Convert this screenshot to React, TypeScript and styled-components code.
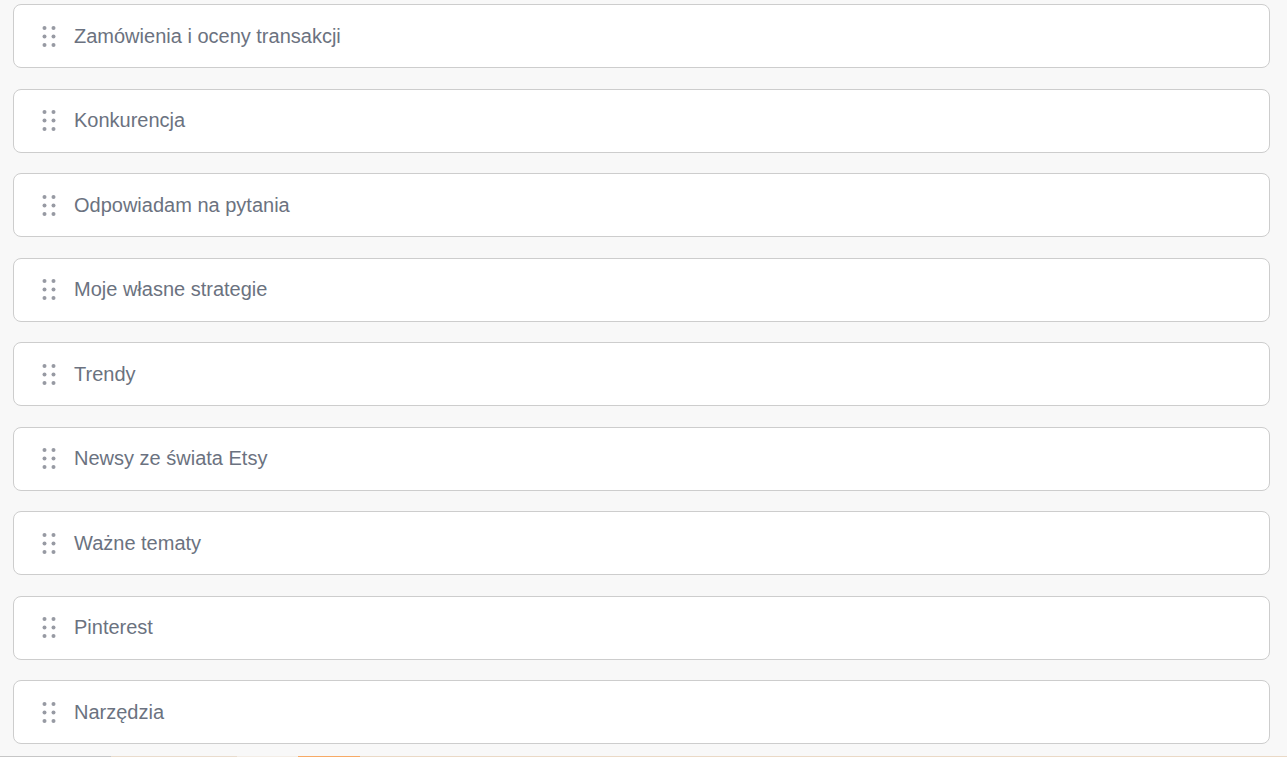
import React from "react";
import styled, { createGlobalStyle } from "styled-components";

const GlobalStyle = createGlobalStyle`
  html, body {
    margin: 0;
    padding: 0;
    background: #f8f8f8;
    font-family: "Liberation Sans", Arial, sans-serif;
    overflow: hidden;
  }
`;

const Page = styled.div`
  min-height: 757px;
  padding: 4px 17px 0 13px;
  box-sizing: border-box;
`;

const List = styled.ul`
  list-style: none;
  margin: 0;
  padding: 0;
  display: flex;
  flex-direction: column;
  gap: 20.5px;
`;

const Card = styled.li`
  height: 64px;
  box-sizing: border-box;
  display: flex;
  align-items: center;
  background: #ffffff;
  border: 1px solid #cdcdcd;
  border-radius: 8px;
  padding-left: 28px;
  cursor: grab;
`;

const Handle = styled.span`
  display: flex;
  width: 14px;
  margin-right: 18px;
  color: #979aa3;
`;

const Label = styled.span`
  font-size: 20px;
  color: #6b7280;
`;

const Strip = styled.div`
  height: 4px;
  margin: 12px -17px 0 -13px;
  background: linear-gradient(
    to right,
    #c6c6c6 0 111px,
    #e9dccd 111px 237px,
    #f3ede6 237px 298px,
    #f7aa66 298px 360px,
    #ead9c6 360px
  );
`;

const topics = [
  "Zamówienia i oceny transakcji",
  "Konkurencja",
  "Odpowiadam na pytania",
  "Moje własne strategie",
  "Trendy",
  "Newsy ze świata Etsy",
  "Ważne tematy",
  "Pinterest",
  "Narzędzia",
];

function GripIcon() {
  return (
    <svg width="14" height="21" viewBox="0 0 14 21" fill="currentColor">
      <circle cx="2.5" cy="2" r="2" />
      <circle cx="11.5" cy="2" r="2" />
      <circle cx="2.5" cy="10.5" r="2" />
      <circle cx="11.5" cy="10.5" r="2" />
      <circle cx="2.5" cy="19" r="2" />
      <circle cx="11.5" cy="19" r="2" />
    </svg>
  );
}

export default function App() {
  return (
    <Page>
      <GlobalStyle />
      <List>
        {topics.map((t) => (
          <Card key={t}>
            <Handle>
              <GripIcon />
            </Handle>
            <Label>{t}</Label>
          </Card>
        ))}
      </List>
      <Strip />
    </Page>
  );
}
